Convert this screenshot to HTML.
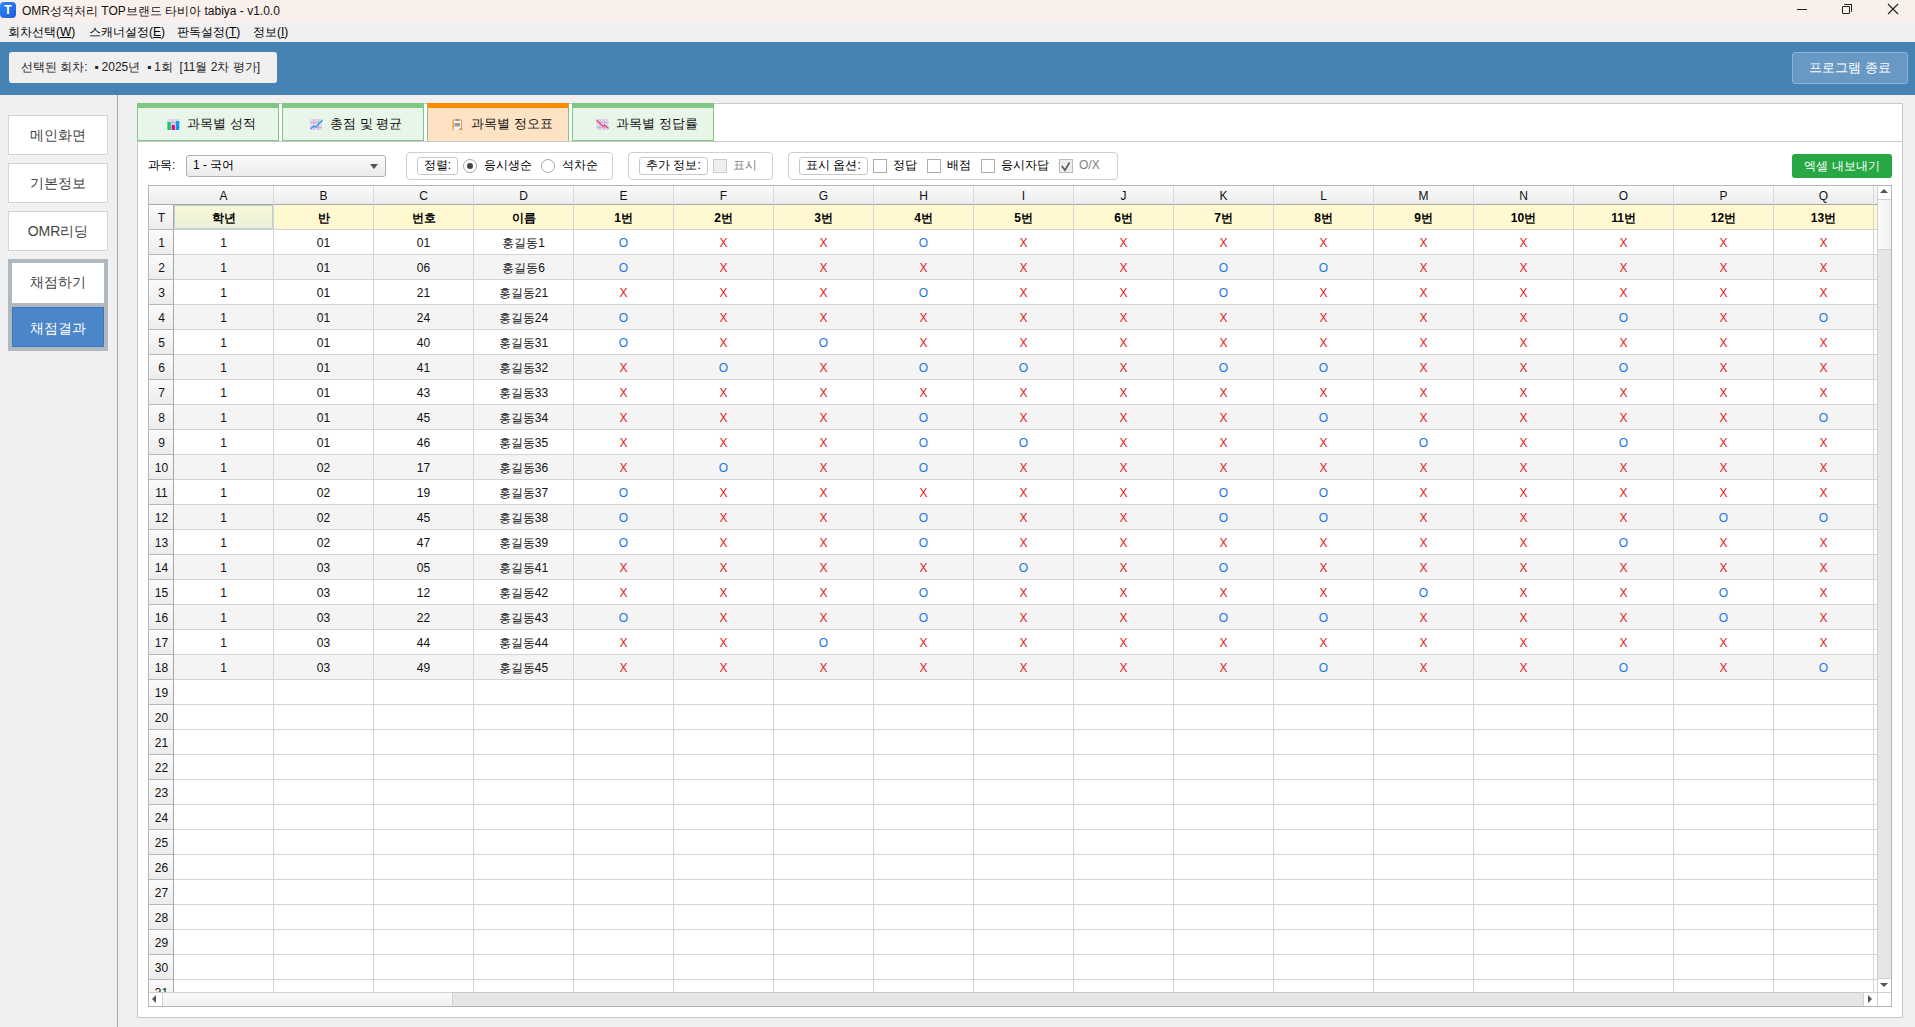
<!DOCTYPE html>
<html><head><meta charset="utf-8">
<style>
*{box-sizing:border-box;margin:0;padding:0}
html,body{width:1915px;height:1027px;overflow:hidden;background:#f0f0f0;font-family:"Liberation Sans",sans-serif;color:#000}
.abs{position:absolute}
#title{position:absolute;left:0;top:0;width:1915px;height:22px;background:#f9f0ec}
#menu{position:absolute;left:0;top:22px;width:1915px;height:20px;background:#f0f0f0;font-size:12px}
#hdr{position:absolute;left:0;top:42px;width:1915px;height:53px;background:#4682b4}
#side{position:absolute;left:0;top:95px;width:118px;height:932px;background:#f0f0f0;border-right:1px solid #a0a8b0}
.sbtn{position:absolute;left:8px;width:100px;height:40px;background:#fff;border:1px solid #cfd6dc;font-size:14px;color:#444;text-align:center;line-height:38px}
#panel{position:absolute;left:137px;top:103px;width:1766px;height:915px;background:#fff;border:1px solid #c8c8c8}
.tab{position:absolute;top:103px;height:38px;background:#e8f5e9;border:1px solid #81c784;border-top:5px solid #81c784;font-size:13px;color:#111}
.tab svg{position:absolute;top:11px}
.tab span{position:absolute;top:8px;line-height:16px;white-space:nowrap}
.tab.on{background:#fde3c4;border-bottom:none;border-top-color:#ff8c00}
.grp{position:absolute;top:152px;height:28px;border:1px solid #cfcfcf;border-radius:4px;background:#fff}
.lbl{position:absolute;top:4px;height:18px;border:1px solid #c8c8c8;border-radius:3px;font-size:12px;line-height:15px;padding:0 5px}
.t12{position:absolute;font-size:12px;line-height:14px;white-space:nowrap}
.cb{position:absolute;top:6px;width:14px;height:14px;border:1px solid #adadad;background:#fff}
#grid{position:absolute;left:148px;top:185px;width:1744px;height:822px;border:1px solid #b4b4b4;background:#fff;overflow:hidden}
#gridin{position:absolute;left:-1px;top:-1px;width:1744px;height:822px}
.ch{position:absolute;top:1px;height:19px;font-size:12px;text-align:center;line-height:21px;border-right:1px solid #d8d8d8;color:#111}
.rh{position:absolute;left:1px;width:25px;font-size:12px;text-align:center;line-height:26px;background:linear-gradient(#fbfbfb,#ececec);color:#111}
.hd{position:absolute;width:99px;height:24px;background:#fff8d0;font-size:12px;font-weight:bold;text-align:center;line-height:26px}
.hd.sel{background:linear-gradient(#f7f6d8,#e9f2da);border:1px solid #b8d4d0;line-height:24px}
.c{position:absolute;width:99px;height:24px;font-size:12px;text-align:center;line-height:26px;color:#111}
.c.o{color:#1a73e8}
.c.x{color:#e02020}
</style></head><body>
<div id="title">
  <div class="abs" style="left:0px;top:2px;width:16px;height:16px;border-radius:4px;background:linear-gradient(135deg,#2f86ff,#1c5fd6);color:#fff;font-weight:bold;font-size:12px;text-align:center;line-height:16px">T</div>
  <div class="t12" style="left:22px;top:4px;color:#111">OMR성적처리 TOP브랜드 타비아 tabiya - v1.0.0</div>
  <div class="abs" style="left:1797px;top:9px;width:10px;height:1px;background:#222"></div>
  <div class="abs" style="left:1842px;top:6px;width:8px;height:8px;border:1px solid #222;border-radius:1px"></div>
  <div class="abs" style="left:1844px;top:4px;width:8px;height:8px;border-top:1px solid #222;border-right:1px solid #222;border-radius:1px"></div>
  <svg class="abs" style="left:1887px;top:3px" width="12" height="12" viewBox="0 0 12 12"><path d="M1 1L11 11M11 1L1 11" stroke="#222" stroke-width="1.1"/></svg>
</div>
<div id="menu">
  <div class="t12" style="left:8px;top:3px">회차선택(<u>W</u>)</div>
  <div class="t12" style="left:89px;top:3px">스캐너설정(<u>E</u>)</div>
  <div class="t12" style="left:177px;top:3px">판독설정(<u>T</u>)</div>
  <div class="t12" style="left:253px;top:3px">정보(<u>I</u>)</div>
</div>
<div id="hdr">
  <div class="abs" style="left:9px;top:10px;width:268px;height:31px;background:#f0f0f0;border-radius:3px;font-size:12px;line-height:31px;padding-left:12px;color:#222">선택된 회차: &nbsp;▪<span style="margin-left:3px">2025년</span> &nbsp;▪<span style="margin-left:3px">1회</span> &nbsp;[11월 2차 평가]</div>
  <div class="abs" style="left:1792px;top:10px;width:116px;height:32px;background:#6898c4;border:1px solid #8db0d4;border-radius:3px;font-size:13px;line-height:30px;text-align:center;color:#fff">프로그램 종료</div>
</div>
<div id="side">
  <div class="sbtn" style="top:20px">메인화면</div>
  <div class="sbtn" style="top:68px">기본정보</div>
  <div class="sbtn" style="top:116px">OMR리딩</div>
  <div class="abs" style="left:8px;top:164px;width:100px;height:92px;background:#b0b8c0"></div>
  <div class="sbtn" style="left:12px;top:168px;width:92px;height:40px;border:none">채점하기</div>
  <div class="abs" style="left:12px;top:212px;width:92px;height:40px;background:#4a86c8;border:1px solid #3c78bc;color:#fff;font-size:14px;text-align:center;line-height:40px">채점결과</div>
</div>
<div id="panel"></div>
<div class="abs" style="left:137px;top:141px;width:1766px;height:1px;background:#c8c8c8"></div>
<div class="tab" style="left:137px;width:142px"><svg width="13" height="11" viewBox="0 0 13 11" style="left:29px"><rect x="0" y="0" width="13" height="11" fill="#e4d6ee"/><path d="M0 3.5H13M0 8.5H13M6 0V11" stroke="#b8a8c4" stroke-width="0.7"/><rect x="0.5" y="3" width="3.3" height="8" fill="#0bd06a"/><rect x="4.7" y="6" width="3.2" height="5" fill="#f0067e"/><rect x="8.8" y="2" width="3.3" height="9" fill="#05a0ea"/></svg><span style="left:49px">과목별 성적</span></div>
<div class="tab" style="left:282px;width:142px"><svg width="13" height="11" viewBox="0 0 13 11" style="left:27px"><rect x="0" y="0" width="12" height="11" fill="#e4d6ee"/><path d="M0 3.5H12M0 8.5H12M8.5 0V11M4 0V11" stroke="#b8a8c4" stroke-width="0.7"/><path d="M0.5 10L4 7L6 8L12.5 1" stroke="#2f9ae6" stroke-width="1.2" fill="none"/></svg><span style="left:47px">총점 및 평균</span></div>
<div class="tab on" style="left:427px;width:142px"><svg width="11" height="11" viewBox="0 0 11 11" style="left:24px"><rect x="0.5" y="0.5" width="9.5" height="10.5" fill="#f0a040"/><rect x="2" y="1.5" width="7" height="9.5" fill="#f4f2fa"/><rect x="3.5" y="0" width="4" height="2" fill="#999"/><rect x="2.5" y="4" width="5.5" height="3.5" fill="#9a9a9a"/><path d="M6.5 11L10 7.5V11Z" fill="#e89030"/></svg><span style="left:43px">과목별 정오표</span></div>
<div class="tab" style="left:572px;width:142px"><svg width="13" height="11" viewBox="0 0 13 11" style="left:23px"><rect x="0.5" y="0" width="12" height="11" fill="#e4d6ee"/><path d="M0.5 3.5H12.5M0.5 8.5H12.5M8.5 0V11M4 0V11" stroke="#b8a8c4" stroke-width="0.7"/><path d="M0.5 1L7 7.5L8.5 6L12.5 9.5" stroke="#ec4070" stroke-width="1.2" fill="none"/></svg><span style="left:43px">과목별 정답률</span></div>

<div class="t12" style="left:148px;top:158px">과목:</div>
<div class="abs" style="left:186px;top:155px;width:200px;height:22px;border:1px solid #b0b0b0;border-radius:3px;background:linear-gradient(#fafafa,#ececec);font-size:12px;line-height:18px;padding-left:6px">1 - 국어</div>
<div class="abs" style="left:370px;top:164px;width:0;height:0;border-left:4px solid transparent;border-right:4px solid transparent;border-top:5px solid #555"></div>

<div class="grp" style="left:406px;width:207px">
  <div class="lbl" style="left:10px;width:41px;text-align:center;padding:0">정렬:</div>
  <div class="abs" style="left:56px;top:6px;width:14px;height:14px;border-radius:50%;border:1px solid #a8a8a8;background:#fff"></div>
  <div class="abs" style="left:60px;top:10px;width:6px;height:6px;border-radius:50%;background:#444"></div>
  <div class="t12" style="left:77px;top:5px">응시생순</div>
  <div class="abs" style="left:134px;top:6px;width:14px;height:14px;border-radius:50%;border:1px solid #a8a8a8;background:#fff"></div>
  <div class="t12" style="left:155px;top:5px">석차순</div>
</div>
<div class="grp" style="left:628px;width:145px">
  <div class="lbl" style="left:10px;width:69px;text-align:center;padding:0">추가 정보:</div>
  <div class="cb" style="left:84px;background:#eee;border-color:#ccc"></div>
  <div class="t12" style="left:104px;top:5px;color:#808080">표시</div>
</div>
<div class="grp" style="left:788px;width:330px">
  <div class="lbl" style="left:10px;width:69px;text-align:center;padding:0">표시 옵션:</div>
  <div class="cb" style="left:84px"></div>
  <div class="t12" style="left:104px;top:5px">정답</div>
  <div class="cb" style="left:138px"></div>
  <div class="t12" style="left:158px;top:5px">배점</div>
  <div class="cb" style="left:192px"></div>
  <div class="t12" style="left:212px;top:5px">응시자답</div>
  <div class="cb" style="left:270px;background:#eee;border-color:#bbb"><svg class="abs" style="left:0;top:0" width="12" height="12" viewBox="0 0 12 12"><path d="M1.8 6L5 10.2L9.5 2.5" stroke="#5a5a5a" stroke-width="1.6" fill="none"/></svg></div>
  <div class="t12" style="left:290px;top:5px;color:#808080">O/X</div>
</div>
<div class="abs" style="left:1792px;top:154px;width:100px;height:24px;background:#28a745;border-radius:3px;color:#fff;font-size:12px;line-height:24px;text-align:center">엑셀 내보내기</div>

<div id="grid"><div id="gridin">
<div class="abs" style="left:0;top:0;width:1729px;height:20px;border-bottom:1px solid #a8a8a8;background:linear-gradient(#fbfbfb,#ececec)"></div>
<div class="abs" style="left:26px;top:45px;width:1703px;height:450px;background:repeating-linear-gradient(to bottom,#ffffff 0,#ffffff 25px,#f4f4f4 25px,#f4f4f4 50px)"></div>
<div class="abs" style="left:26px;top:20px;width:1703px;height:795px;background:repeating-linear-gradient(to right,transparent 0,transparent 99px,#d4d4d4 99px,#d4d4d4 100px)"></div>
<div class="ch" style="left:26px;width:100px">A</div>
<div class="ch" style="left:126px;width:100px">B</div>
<div class="ch" style="left:226px;width:100px">C</div>
<div class="ch" style="left:326px;width:100px">D</div>
<div class="ch" style="left:426px;width:100px">E</div>
<div class="ch" style="left:526px;width:100px">F</div>
<div class="ch" style="left:626px;width:100px">G</div>
<div class="ch" style="left:726px;width:100px">H</div>
<div class="ch" style="left:826px;width:100px">I</div>
<div class="ch" style="left:926px;width:100px">J</div>
<div class="ch" style="left:1026px;width:100px">K</div>
<div class="ch" style="left:1126px;width:100px">L</div>
<div class="ch" style="left:1226px;width:100px">M</div>
<div class="ch" style="left:1326px;width:100px">N</div>
<div class="ch" style="left:1426px;width:100px">O</div>
<div class="ch" style="left:1526px;width:100px">P</div>
<div class="ch" style="left:1626px;width:100px">Q</div>
<div class="rh" style="top:20px;height:24px">T</div>
<div class="hd sel" style="left:26px;top:20px">학년</div>
<div class="hd" style="left:126px;top:20px">반</div>
<div class="hd" style="left:226px;top:20px">번호</div>
<div class="hd" style="left:326px;top:20px">이름</div>
<div class="hd" style="left:426px;top:20px">1번</div>
<div class="hd" style="left:526px;top:20px">2번</div>
<div class="hd" style="left:626px;top:20px">3번</div>
<div class="hd" style="left:726px;top:20px">4번</div>
<div class="hd" style="left:826px;top:20px">5번</div>
<div class="hd" style="left:926px;top:20px">6번</div>
<div class="hd" style="left:1026px;top:20px">7번</div>
<div class="hd" style="left:1126px;top:20px">8번</div>
<div class="hd" style="left:1226px;top:20px">9번</div>
<div class="hd" style="left:1326px;top:20px">10번</div>
<div class="hd" style="left:1426px;top:20px">11번</div>
<div class="hd" style="left:1526px;top:20px">12번</div>
<div class="hd" style="left:1626px;top:20px">13번</div>
<div class="rh" style="top:45px;height:24px">1</div>
<div class="c" style="left:26px;top:45px">1</div>
<div class="c" style="left:126px;top:45px">01</div>
<div class="c" style="left:226px;top:45px">01</div>
<div class="c" style="left:326px;top:45px">홍길동1</div>
<div class="c o" style="left:426px;top:45px">O</div>
<div class="c x" style="left:526px;top:45px">X</div>
<div class="c x" style="left:626px;top:45px">X</div>
<div class="c o" style="left:726px;top:45px">O</div>
<div class="c x" style="left:826px;top:45px">X</div>
<div class="c x" style="left:926px;top:45px">X</div>
<div class="c x" style="left:1026px;top:45px">X</div>
<div class="c x" style="left:1126px;top:45px">X</div>
<div class="c x" style="left:1226px;top:45px">X</div>
<div class="c x" style="left:1326px;top:45px">X</div>
<div class="c x" style="left:1426px;top:45px">X</div>
<div class="c x" style="left:1526px;top:45px">X</div>
<div class="c x" style="left:1626px;top:45px">X</div>
<div class="rh" style="top:70px;height:24px">2</div>
<div class="c" style="left:26px;top:70px">1</div>
<div class="c" style="left:126px;top:70px">01</div>
<div class="c" style="left:226px;top:70px">06</div>
<div class="c" style="left:326px;top:70px">홍길동6</div>
<div class="c o" style="left:426px;top:70px">O</div>
<div class="c x" style="left:526px;top:70px">X</div>
<div class="c x" style="left:626px;top:70px">X</div>
<div class="c x" style="left:726px;top:70px">X</div>
<div class="c x" style="left:826px;top:70px">X</div>
<div class="c x" style="left:926px;top:70px">X</div>
<div class="c o" style="left:1026px;top:70px">O</div>
<div class="c o" style="left:1126px;top:70px">O</div>
<div class="c x" style="left:1226px;top:70px">X</div>
<div class="c x" style="left:1326px;top:70px">X</div>
<div class="c x" style="left:1426px;top:70px">X</div>
<div class="c x" style="left:1526px;top:70px">X</div>
<div class="c x" style="left:1626px;top:70px">X</div>
<div class="rh" style="top:95px;height:24px">3</div>
<div class="c" style="left:26px;top:95px">1</div>
<div class="c" style="left:126px;top:95px">01</div>
<div class="c" style="left:226px;top:95px">21</div>
<div class="c" style="left:326px;top:95px">홍길동21</div>
<div class="c x" style="left:426px;top:95px">X</div>
<div class="c x" style="left:526px;top:95px">X</div>
<div class="c x" style="left:626px;top:95px">X</div>
<div class="c o" style="left:726px;top:95px">O</div>
<div class="c x" style="left:826px;top:95px">X</div>
<div class="c x" style="left:926px;top:95px">X</div>
<div class="c o" style="left:1026px;top:95px">O</div>
<div class="c x" style="left:1126px;top:95px">X</div>
<div class="c x" style="left:1226px;top:95px">X</div>
<div class="c x" style="left:1326px;top:95px">X</div>
<div class="c x" style="left:1426px;top:95px">X</div>
<div class="c x" style="left:1526px;top:95px">X</div>
<div class="c x" style="left:1626px;top:95px">X</div>
<div class="rh" style="top:120px;height:24px">4</div>
<div class="c" style="left:26px;top:120px">1</div>
<div class="c" style="left:126px;top:120px">01</div>
<div class="c" style="left:226px;top:120px">24</div>
<div class="c" style="left:326px;top:120px">홍길동24</div>
<div class="c o" style="left:426px;top:120px">O</div>
<div class="c x" style="left:526px;top:120px">X</div>
<div class="c x" style="left:626px;top:120px">X</div>
<div class="c x" style="left:726px;top:120px">X</div>
<div class="c x" style="left:826px;top:120px">X</div>
<div class="c x" style="left:926px;top:120px">X</div>
<div class="c x" style="left:1026px;top:120px">X</div>
<div class="c x" style="left:1126px;top:120px">X</div>
<div class="c x" style="left:1226px;top:120px">X</div>
<div class="c x" style="left:1326px;top:120px">X</div>
<div class="c o" style="left:1426px;top:120px">O</div>
<div class="c x" style="left:1526px;top:120px">X</div>
<div class="c o" style="left:1626px;top:120px">O</div>
<div class="rh" style="top:145px;height:24px">5</div>
<div class="c" style="left:26px;top:145px">1</div>
<div class="c" style="left:126px;top:145px">01</div>
<div class="c" style="left:226px;top:145px">40</div>
<div class="c" style="left:326px;top:145px">홍길동31</div>
<div class="c o" style="left:426px;top:145px">O</div>
<div class="c x" style="left:526px;top:145px">X</div>
<div class="c o" style="left:626px;top:145px">O</div>
<div class="c x" style="left:726px;top:145px">X</div>
<div class="c x" style="left:826px;top:145px">X</div>
<div class="c x" style="left:926px;top:145px">X</div>
<div class="c x" style="left:1026px;top:145px">X</div>
<div class="c x" style="left:1126px;top:145px">X</div>
<div class="c x" style="left:1226px;top:145px">X</div>
<div class="c x" style="left:1326px;top:145px">X</div>
<div class="c x" style="left:1426px;top:145px">X</div>
<div class="c x" style="left:1526px;top:145px">X</div>
<div class="c x" style="left:1626px;top:145px">X</div>
<div class="rh" style="top:170px;height:24px">6</div>
<div class="c" style="left:26px;top:170px">1</div>
<div class="c" style="left:126px;top:170px">01</div>
<div class="c" style="left:226px;top:170px">41</div>
<div class="c" style="left:326px;top:170px">홍길동32</div>
<div class="c x" style="left:426px;top:170px">X</div>
<div class="c o" style="left:526px;top:170px">O</div>
<div class="c x" style="left:626px;top:170px">X</div>
<div class="c o" style="left:726px;top:170px">O</div>
<div class="c o" style="left:826px;top:170px">O</div>
<div class="c x" style="left:926px;top:170px">X</div>
<div class="c o" style="left:1026px;top:170px">O</div>
<div class="c o" style="left:1126px;top:170px">O</div>
<div class="c x" style="left:1226px;top:170px">X</div>
<div class="c x" style="left:1326px;top:170px">X</div>
<div class="c o" style="left:1426px;top:170px">O</div>
<div class="c x" style="left:1526px;top:170px">X</div>
<div class="c x" style="left:1626px;top:170px">X</div>
<div class="rh" style="top:195px;height:24px">7</div>
<div class="c" style="left:26px;top:195px">1</div>
<div class="c" style="left:126px;top:195px">01</div>
<div class="c" style="left:226px;top:195px">43</div>
<div class="c" style="left:326px;top:195px">홍길동33</div>
<div class="c x" style="left:426px;top:195px">X</div>
<div class="c x" style="left:526px;top:195px">X</div>
<div class="c x" style="left:626px;top:195px">X</div>
<div class="c x" style="left:726px;top:195px">X</div>
<div class="c x" style="left:826px;top:195px">X</div>
<div class="c x" style="left:926px;top:195px">X</div>
<div class="c x" style="left:1026px;top:195px">X</div>
<div class="c x" style="left:1126px;top:195px">X</div>
<div class="c x" style="left:1226px;top:195px">X</div>
<div class="c x" style="left:1326px;top:195px">X</div>
<div class="c x" style="left:1426px;top:195px">X</div>
<div class="c x" style="left:1526px;top:195px">X</div>
<div class="c x" style="left:1626px;top:195px">X</div>
<div class="rh" style="top:220px;height:24px">8</div>
<div class="c" style="left:26px;top:220px">1</div>
<div class="c" style="left:126px;top:220px">01</div>
<div class="c" style="left:226px;top:220px">45</div>
<div class="c" style="left:326px;top:220px">홍길동34</div>
<div class="c x" style="left:426px;top:220px">X</div>
<div class="c x" style="left:526px;top:220px">X</div>
<div class="c x" style="left:626px;top:220px">X</div>
<div class="c o" style="left:726px;top:220px">O</div>
<div class="c x" style="left:826px;top:220px">X</div>
<div class="c x" style="left:926px;top:220px">X</div>
<div class="c x" style="left:1026px;top:220px">X</div>
<div class="c o" style="left:1126px;top:220px">O</div>
<div class="c x" style="left:1226px;top:220px">X</div>
<div class="c x" style="left:1326px;top:220px">X</div>
<div class="c x" style="left:1426px;top:220px">X</div>
<div class="c x" style="left:1526px;top:220px">X</div>
<div class="c o" style="left:1626px;top:220px">O</div>
<div class="rh" style="top:245px;height:24px">9</div>
<div class="c" style="left:26px;top:245px">1</div>
<div class="c" style="left:126px;top:245px">01</div>
<div class="c" style="left:226px;top:245px">46</div>
<div class="c" style="left:326px;top:245px">홍길동35</div>
<div class="c x" style="left:426px;top:245px">X</div>
<div class="c x" style="left:526px;top:245px">X</div>
<div class="c x" style="left:626px;top:245px">X</div>
<div class="c o" style="left:726px;top:245px">O</div>
<div class="c o" style="left:826px;top:245px">O</div>
<div class="c x" style="left:926px;top:245px">X</div>
<div class="c x" style="left:1026px;top:245px">X</div>
<div class="c x" style="left:1126px;top:245px">X</div>
<div class="c o" style="left:1226px;top:245px">O</div>
<div class="c x" style="left:1326px;top:245px">X</div>
<div class="c o" style="left:1426px;top:245px">O</div>
<div class="c x" style="left:1526px;top:245px">X</div>
<div class="c x" style="left:1626px;top:245px">X</div>
<div class="rh" style="top:270px;height:24px">10</div>
<div class="c" style="left:26px;top:270px">1</div>
<div class="c" style="left:126px;top:270px">02</div>
<div class="c" style="left:226px;top:270px">17</div>
<div class="c" style="left:326px;top:270px">홍길동36</div>
<div class="c x" style="left:426px;top:270px">X</div>
<div class="c o" style="left:526px;top:270px">O</div>
<div class="c x" style="left:626px;top:270px">X</div>
<div class="c o" style="left:726px;top:270px">O</div>
<div class="c x" style="left:826px;top:270px">X</div>
<div class="c x" style="left:926px;top:270px">X</div>
<div class="c x" style="left:1026px;top:270px">X</div>
<div class="c x" style="left:1126px;top:270px">X</div>
<div class="c x" style="left:1226px;top:270px">X</div>
<div class="c x" style="left:1326px;top:270px">X</div>
<div class="c x" style="left:1426px;top:270px">X</div>
<div class="c x" style="left:1526px;top:270px">X</div>
<div class="c x" style="left:1626px;top:270px">X</div>
<div class="rh" style="top:295px;height:24px">11</div>
<div class="c" style="left:26px;top:295px">1</div>
<div class="c" style="left:126px;top:295px">02</div>
<div class="c" style="left:226px;top:295px">19</div>
<div class="c" style="left:326px;top:295px">홍길동37</div>
<div class="c o" style="left:426px;top:295px">O</div>
<div class="c x" style="left:526px;top:295px">X</div>
<div class="c x" style="left:626px;top:295px">X</div>
<div class="c x" style="left:726px;top:295px">X</div>
<div class="c x" style="left:826px;top:295px">X</div>
<div class="c x" style="left:926px;top:295px">X</div>
<div class="c o" style="left:1026px;top:295px">O</div>
<div class="c o" style="left:1126px;top:295px">O</div>
<div class="c x" style="left:1226px;top:295px">X</div>
<div class="c x" style="left:1326px;top:295px">X</div>
<div class="c x" style="left:1426px;top:295px">X</div>
<div class="c x" style="left:1526px;top:295px">X</div>
<div class="c x" style="left:1626px;top:295px">X</div>
<div class="rh" style="top:320px;height:24px">12</div>
<div class="c" style="left:26px;top:320px">1</div>
<div class="c" style="left:126px;top:320px">02</div>
<div class="c" style="left:226px;top:320px">45</div>
<div class="c" style="left:326px;top:320px">홍길동38</div>
<div class="c o" style="left:426px;top:320px">O</div>
<div class="c x" style="left:526px;top:320px">X</div>
<div class="c x" style="left:626px;top:320px">X</div>
<div class="c o" style="left:726px;top:320px">O</div>
<div class="c x" style="left:826px;top:320px">X</div>
<div class="c x" style="left:926px;top:320px">X</div>
<div class="c o" style="left:1026px;top:320px">O</div>
<div class="c o" style="left:1126px;top:320px">O</div>
<div class="c x" style="left:1226px;top:320px">X</div>
<div class="c x" style="left:1326px;top:320px">X</div>
<div class="c x" style="left:1426px;top:320px">X</div>
<div class="c o" style="left:1526px;top:320px">O</div>
<div class="c o" style="left:1626px;top:320px">O</div>
<div class="rh" style="top:345px;height:24px">13</div>
<div class="c" style="left:26px;top:345px">1</div>
<div class="c" style="left:126px;top:345px">02</div>
<div class="c" style="left:226px;top:345px">47</div>
<div class="c" style="left:326px;top:345px">홍길동39</div>
<div class="c o" style="left:426px;top:345px">O</div>
<div class="c x" style="left:526px;top:345px">X</div>
<div class="c x" style="left:626px;top:345px">X</div>
<div class="c o" style="left:726px;top:345px">O</div>
<div class="c x" style="left:826px;top:345px">X</div>
<div class="c x" style="left:926px;top:345px">X</div>
<div class="c x" style="left:1026px;top:345px">X</div>
<div class="c x" style="left:1126px;top:345px">X</div>
<div class="c x" style="left:1226px;top:345px">X</div>
<div class="c x" style="left:1326px;top:345px">X</div>
<div class="c o" style="left:1426px;top:345px">O</div>
<div class="c x" style="left:1526px;top:345px">X</div>
<div class="c x" style="left:1626px;top:345px">X</div>
<div class="rh" style="top:370px;height:24px">14</div>
<div class="c" style="left:26px;top:370px">1</div>
<div class="c" style="left:126px;top:370px">03</div>
<div class="c" style="left:226px;top:370px">05</div>
<div class="c" style="left:326px;top:370px">홍길동41</div>
<div class="c x" style="left:426px;top:370px">X</div>
<div class="c x" style="left:526px;top:370px">X</div>
<div class="c x" style="left:626px;top:370px">X</div>
<div class="c x" style="left:726px;top:370px">X</div>
<div class="c o" style="left:826px;top:370px">O</div>
<div class="c x" style="left:926px;top:370px">X</div>
<div class="c o" style="left:1026px;top:370px">O</div>
<div class="c x" style="left:1126px;top:370px">X</div>
<div class="c x" style="left:1226px;top:370px">X</div>
<div class="c x" style="left:1326px;top:370px">X</div>
<div class="c x" style="left:1426px;top:370px">X</div>
<div class="c x" style="left:1526px;top:370px">X</div>
<div class="c x" style="left:1626px;top:370px">X</div>
<div class="rh" style="top:395px;height:24px">15</div>
<div class="c" style="left:26px;top:395px">1</div>
<div class="c" style="left:126px;top:395px">03</div>
<div class="c" style="left:226px;top:395px">12</div>
<div class="c" style="left:326px;top:395px">홍길동42</div>
<div class="c x" style="left:426px;top:395px">X</div>
<div class="c x" style="left:526px;top:395px">X</div>
<div class="c x" style="left:626px;top:395px">X</div>
<div class="c o" style="left:726px;top:395px">O</div>
<div class="c x" style="left:826px;top:395px">X</div>
<div class="c x" style="left:926px;top:395px">X</div>
<div class="c x" style="left:1026px;top:395px">X</div>
<div class="c x" style="left:1126px;top:395px">X</div>
<div class="c o" style="left:1226px;top:395px">O</div>
<div class="c x" style="left:1326px;top:395px">X</div>
<div class="c x" style="left:1426px;top:395px">X</div>
<div class="c o" style="left:1526px;top:395px">O</div>
<div class="c x" style="left:1626px;top:395px">X</div>
<div class="rh" style="top:420px;height:24px">16</div>
<div class="c" style="left:26px;top:420px">1</div>
<div class="c" style="left:126px;top:420px">03</div>
<div class="c" style="left:226px;top:420px">22</div>
<div class="c" style="left:326px;top:420px">홍길동43</div>
<div class="c o" style="left:426px;top:420px">O</div>
<div class="c x" style="left:526px;top:420px">X</div>
<div class="c x" style="left:626px;top:420px">X</div>
<div class="c o" style="left:726px;top:420px">O</div>
<div class="c x" style="left:826px;top:420px">X</div>
<div class="c x" style="left:926px;top:420px">X</div>
<div class="c o" style="left:1026px;top:420px">O</div>
<div class="c o" style="left:1126px;top:420px">O</div>
<div class="c x" style="left:1226px;top:420px">X</div>
<div class="c x" style="left:1326px;top:420px">X</div>
<div class="c x" style="left:1426px;top:420px">X</div>
<div class="c o" style="left:1526px;top:420px">O</div>
<div class="c x" style="left:1626px;top:420px">X</div>
<div class="rh" style="top:445px;height:24px">17</div>
<div class="c" style="left:26px;top:445px">1</div>
<div class="c" style="left:126px;top:445px">03</div>
<div class="c" style="left:226px;top:445px">44</div>
<div class="c" style="left:326px;top:445px">홍길동44</div>
<div class="c x" style="left:426px;top:445px">X</div>
<div class="c x" style="left:526px;top:445px">X</div>
<div class="c o" style="left:626px;top:445px">O</div>
<div class="c x" style="left:726px;top:445px">X</div>
<div class="c x" style="left:826px;top:445px">X</div>
<div class="c x" style="left:926px;top:445px">X</div>
<div class="c x" style="left:1026px;top:445px">X</div>
<div class="c x" style="left:1126px;top:445px">X</div>
<div class="c x" style="left:1226px;top:445px">X</div>
<div class="c x" style="left:1326px;top:445px">X</div>
<div class="c x" style="left:1426px;top:445px">X</div>
<div class="c x" style="left:1526px;top:445px">X</div>
<div class="c x" style="left:1626px;top:445px">X</div>
<div class="rh" style="top:470px;height:24px">18</div>
<div class="c" style="left:26px;top:470px">1</div>
<div class="c" style="left:126px;top:470px">03</div>
<div class="c" style="left:226px;top:470px">49</div>
<div class="c" style="left:326px;top:470px">홍길동45</div>
<div class="c x" style="left:426px;top:470px">X</div>
<div class="c x" style="left:526px;top:470px">X</div>
<div class="c x" style="left:626px;top:470px">X</div>
<div class="c x" style="left:726px;top:470px">X</div>
<div class="c x" style="left:826px;top:470px">X</div>
<div class="c x" style="left:926px;top:470px">X</div>
<div class="c x" style="left:1026px;top:470px">X</div>
<div class="c o" style="left:1126px;top:470px">O</div>
<div class="c x" style="left:1226px;top:470px">X</div>
<div class="c x" style="left:1326px;top:470px">X</div>
<div class="c o" style="left:1426px;top:470px">O</div>
<div class="c x" style="left:1526px;top:470px">X</div>
<div class="c o" style="left:1626px;top:470px">O</div>
<div class="rh" style="top:495px;height:24px">19</div>
<div class="rh" style="top:520px;height:24px">20</div>
<div class="rh" style="top:545px;height:24px">21</div>
<div class="rh" style="top:570px;height:24px">22</div>
<div class="rh" style="top:595px;height:24px">23</div>
<div class="rh" style="top:620px;height:24px">24</div>
<div class="rh" style="top:645px;height:24px">25</div>
<div class="rh" style="top:670px;height:24px">26</div>
<div class="rh" style="top:695px;height:24px">27</div>
<div class="rh" style="top:720px;height:24px">28</div>
<div class="rh" style="top:745px;height:24px">29</div>
<div class="rh" style="top:770px;height:24px">30</div>
<div class="rh" style="top:795px;height:24px">31</div>
<div class="abs" style="left:1726px;top:20px;width:3px;height:24px;background:#fff8d0"></div>
<div class="abs" style="left:0;top:20px;width:1729px;height:795px;background:repeating-linear-gradient(to bottom,transparent 0,transparent 24px,#d4d4d4 24px,#d4d4d4 25px)"></div>
<div class="abs" style="left:0;top:20px;width:25px;height:795px;background:repeating-linear-gradient(to bottom,transparent 0,transparent 24px,#b8b8b8 24px,#b8b8b8 25px)"></div>
<div class="abs" style="left:25px;top:20px;width:1px;height:795px;background:#a8a8a8"></div>
</div>
  <!-- vscroll -->
  <div class="abs" style="left:1728px;top:-1px;width:15px;height:808px;background:#e6e6e6;border-left:1px solid #d0d0d0"></div>
  <div class="abs" style="left:1728px;top:-1px;width:15px;height:15px;background:#fff;border:1px solid #d0d0d0"></div>
  <div class="abs" style="left:1731px;top:3px;width:0;height:0;border-left:4px solid transparent;border-right:4px solid transparent;border-bottom:4px solid #555"></div>
  <div class="abs" style="left:1728px;top:13px;width:15px;height:51px;background:linear-gradient(to right,#fafafa,#f0f0f0);border:1px solid #d0d0d0"></div>
  <div class="abs" style="left:1728px;top:792px;width:15px;height:15px;background:#fff;border:1px solid #d0d0d0"></div>
  <div class="abs" style="left:1731px;top:797px;width:0;height:0;border-left:4px solid transparent;border-right:4px solid transparent;border-top:4px solid #555"></div>
  <!-- hscroll -->
  <div class="abs" style="left:-1px;top:806px;width:1730px;height:15px;background:#e6e6e6;border-top:1px solid #c8c8c8"></div>
  <div class="abs" style="left:-1px;top:806px;width:15px;height:15px;background:#fff;border:1px solid #d0d0d0"></div>
  <div class="abs" style="left:3px;top:809px;width:0;height:0;border-top:4px solid transparent;border-bottom:4px solid transparent;border-right:4px solid #555"></div>
  <div class="abs" style="left:13px;top:806px;width:291px;height:15px;background:linear-gradient(#fafafa,#f0f0f0);border:1px solid #d0d0d0"></div>
  <div class="abs" style="left:1714px;top:806px;width:15px;height:15px;background:#fff;border:1px solid #d0d0d0"></div>
  <div class="abs" style="left:1719px;top:809px;width:0;height:0;border-top:4px solid transparent;border-bottom:4px solid transparent;border-left:4px solid #555"></div>
  <div class="abs" style="left:1728px;top:806px;width:15px;height:15px;background:#fff;border:1px solid #d0d0d0"></div>
</div>
</body></html>
